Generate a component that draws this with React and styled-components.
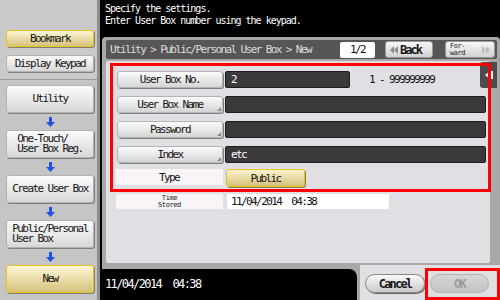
import styled, { createGlobalStyle } from "styled-components";

const GlobalStyle = createGlobalStyle`
  html, body {
    margin: 0;
    padding: 0;
    background: #000;
  }
  body {
    font-family: "DejaVu Sans Mono", "Liberation Mono", monospace;
    font-size: 11px;
    letter-spacing: -1.6px;
  }
`;

const Screen = styled.div`
  width: 500px;
  height: 300px;
  display: flex;
  background: #000;
  overflow: hidden;
`;

const Sidebar = styled.aside`
  box-sizing: border-box;
  width: 100px;
  flex-shrink: 0;
  background: #c5c5c5;
  border-right: 3px solid #8e8e8e;
  display: flex;
  flex-direction: column;
`;

const SideTop = styled.div`
  box-sizing: border-box;
  height: 80px;
  padding: 30px 0 0 6px;
  display: flex;
  flex-direction: column;
  gap: 8px;
  background: #cacaca;
  border-bottom: 1px solid #9b9b9b;
`;

const SideFlow = styled.div`
  padding: 5px 0 0 6px;
  display: flex;
  flex-direction: column;
`;

const SideButton = styled.div`
  box-sizing: border-box;
  width: 88px;
  height: ${(p) => (p.$small ? "17px" : "28px")};
  display: flex;
  align-items: center;
  justify-content: center;
  text-align: left;
  line-height: 10px;
  color: #151515;
  border-radius: 3px;
  border: 1px solid ${(p) => (p.$active ? "#e8c41c" : "#b2b2b2")};
  background: ${(p) =>
    p.$active
      ? "linear-gradient(#fdf7d8, #d6c27c)"
      : "linear-gradient(#fbfbfb, #d8d8d8)"};
  box-shadow: 1px 1px 0 #7f7f7f;
`;

const FlowArrow = styled.div`
  width: 88px;
  height: 17px;
  display: flex;
  align-items: center;
  justify-content: center;
`;

const Main = styled.main`
  flex: 1;
  min-width: 0;
  display: flex;
  flex-direction: column;
  padding-left: 2px;
`;

const Message = styled.div`
  box-sizing: border-box;
  height: 37px;
  flex-shrink: 0;
  padding: 3px 0 0 3px;
  color: #fff;
  font-size: 10px;
  line-height: 12px;
  letter-spacing: -1px;
`;

const Panel = styled.section`
  position: relative;
  flex: 1;
  display: flex;
  flex-direction: column;
  padding: 3px 3px 2px 4px;
  background: #a8a8a8;
  border-radius: 4px 4px 0 0;
`;

const TitleBar = styled.div`
  height: 19px;
  display: flex;
  align-items: center;
  padding: 0 2px 0 4px;
  background: #565656;
  border-radius: 2px;
  color: #dcdcdc;
`;

const Crumb = styled.span`
  flex: 1;
  white-space: nowrap;
`;

const PageBox = styled.div`
  width: 35px;
  height: 16px;
  display: flex;
  align-items: center;
  justify-content: center;
  background: #fff;
  border-radius: 2px;
  color: #111;
`;

const NavButton = styled.div`
  box-sizing: border-box;
  width: ${(p) => p.$w}px;
  height: 17px;
  margin-left: ${(p) => p.$gap}px;
  display: flex;
  align-items: center;
  padding: 0 4px;
  gap: 2px;
  border-radius: 3px;
  border: 1px solid #9a9a9a;
  background: linear-gradient(#f7f7f7, #d2d2d2);
  color: #1a1a1a;
`;

const BackLabel = styled.span`
  font-size: 12px;
  font-weight: bold;
  letter-spacing: -2px;
`;

const TinyText = styled.span`
  flex: 1;
  font-size: 7px;
  line-height: 7px;
  letter-spacing: -0.5px;
  color: #222;
`;

const Content = styled.div`
  position: relative;
  flex: 1;
  margin: 2px 7px 0 0;
  padding: 2px 0 0 4px;
  background: #e0dfe4;
  border-radius: 2px;
`;

const SideTab = styled.div`
  position: absolute;
  left: 374px;
  top: 1px;
  width: 17px;
  height: 26px;
  display: flex;
  align-items: center;
  justify-content: center;
  background: #4c4c4c;
  border-radius: 3px 0 0 3px;
`;

const Form = styled.div`
  position: relative;
  z-index: 1;
  box-sizing: border-box;
  width: 381px;
  border: 3px solid #ff0000;
  padding: 5px 2px 2px 4px;
  display: flex;
  flex-direction: column;
  gap: 8px;
`;

const Row = styled.div`
  display: flex;
  align-items: stretch;
  height: 17px;
  gap: 2px;
`;

const LabelButton = styled.div`
  position: relative;
  box-sizing: border-box;
  width: 106px;
  flex-shrink: 0;
  display: flex;
  align-items: center;
  justify-content: center;
  border-radius: 3px;
  border: 1px solid #b4b4b4;
  background: linear-gradient(#fbfbfb, #d5d5d5);
  box-shadow: 1px 1px 0 #808080;
  color: #151515;

  &::after {
    content: "";
    display: ${(p) => (p.$menu ? "block" : "none")};
    position: absolute;
    right: 1px;
    bottom: 1px;
    border-style: solid;
    border-width: 0 0 4px 4px;
    border-color: transparent transparent #8a8a8a transparent;
  }
`;

const Field = styled.div`
  box-sizing: border-box;
  width: ${(p) => p.$width || "auto"};
  flex: ${(p) => (p.$width ? "none" : "1")};
  display: flex;
  align-items: center;
  padding-left: 5px;
  background: #3a393b;
  border: 1px solid #1d1d1d;
  border-radius: 2px;
  color: #fff;
`;

const Range = styled.span`
  margin-left: 17px;
  align-self: center;
  color: #111;
`;

const TypeRow = styled.div`
  display: flex;
  align-items: flex-start;
  height: 18px;
  margin-top: -2px;
  gap: 3px;
`;

const PlainLabel = styled.div`
  width: ${(p) => p.$w}px;
  height: ${(p) => p.$h}px;
  margin-left: ${(p) => p.$shift || 0}px;
  display: flex;
  align-items: center;
  justify-content: center;
  text-align: center;
  background: #f8f4f7;
  color: #151515;
`;

const YellowButton = styled.div`
  box-sizing: border-box;
  width: 79px;
  height: 18px;
  display: flex;
  align-items: center;
  justify-content: center;
  border-radius: 3px;
  border: 1px solid #e6c21e;
  background: linear-gradient(#fbf3cf, #d7c27c);
  box-shadow: 1px 1px 0 #8a7d4a;
  color: #151515;
`;

const TimeRow = styled.div`
  display: flex;
  height: 15px;
  margin: 2px 0 0 6px;
  gap: 4px;
`;

const StampLabel = styled.div`
  font-size: 7px;
  line-height: 7px;
  letter-spacing: -0.4px;
`;

const TimeValue = styled.div`
  width: 158px;
  display: flex;
  align-items: center;
  padding-left: 4px;
  background: #fff;
  color: #111;
  white-space: pre;
`;

const Footer = styled.div`
  height: 35px;
  flex-shrink: 0;
  display: flex;
  background: #a8a8a8;
`;

const DateBar = styled.div`
  flex: 1;
  margin-top: 4px;
  padding: 9px 0 0 3px;
  background: #000;
  border-top-right-radius: 8px;
  color: #fff;
  font-size: 12px;
  line-height: 12px;
  letter-spacing: -1.6px;
  white-space: pre;
`;

const ActionTab = styled.div`
  box-sizing: border-box;
  width: 143px;
  display: flex;
  align-items: flex-start;
  padding-left: 5px;
  background: #e0dfe4;
  border-left: 3px solid #a8a8a8;
`;

const PillButton = styled.div`
  box-sizing: border-box;
  width: ${(p) => p.$w}px;
  height: 19px;
  margin-top: ${(p) => p.$top || 0}px;
  display: flex;
  align-items: center;
  justify-content: center;
  border-radius: 10px;
  border: 1px solid ${(p) => (p.$disabled ? "#b2b2b2" : "#888")};
  background: ${(p) =>
    p.$disabled
      ? "linear-gradient(#d6d6d6, #c4c4c4)"
      : "linear-gradient(#fafafa, #c9c9c9)"};
  box-shadow: ${(p) => (p.$disabled ? "none" : "1px 1px 0 #666")};
  color: ${(p) => (p.$disabled ? "#9c9c9c" : "#1a1a1a")};
  font-size: 12px;
  font-weight: bold;
  letter-spacing: -1.8px;
`;

const OkFrame = styled.div`
  box-sizing: border-box;
  width: 75px;
  height: 32px;
  margin-top: 3px;
  padding: 3px 0 0 2px;
  border: 3px solid #ff0000;
`;

const DownArrow = () => (
  <svg width="9" height="10" viewBox="0 0 9 10">
    <path d="M3 0h3v5h3L4.5 10 0 5h3z" fill="#1f52ea" />
  </svg>
);

const DoubleArrow = ({ dir, color }) => (
  <svg width="8" height="8" viewBox="0 0 8 8">
    {dir === "left" ? (
      <path d="M4 0v8L0 4zM8 0v8L4 4z" fill={color} />
    ) : (
      <path d="M0 0v8l4-4zM4 0v8l4-4z" fill={color} />
    )}
  </svg>
);

const TabIcon = () => (
  <svg width="8" height="8" viewBox="0 0 8 8">
    <path d="M5 0v8L0 4z" fill="#fff" />
    <rect x="6" y="0" width="2" height="8" fill="#fff" />
  </svg>
);

const flow = [
  { label: "Utility" },
  { label: "One-Touch/\nUser Box Reg." },
  { label: "Create User Box" },
  { label: "Public/Personal\nUser Box" },
  { label: "New", active: true },
];

const fields = [
  { label: "User Box No.", value: "2", width: "125px", range: "1 - 999999999" },
  { label: "User Box Name", value: "", menu: true },
  { label: "Password", value: "", menu: true },
  { label: "Index", value: "etc", menu: true },
];

const App = () => {
  return (
    <Screen>
      <GlobalStyle />
      <Sidebar>
        <SideTop>
          <SideButton $small $active>
            Bookmark
          </SideButton>
          <SideButton $small>Display Keypad</SideButton>
        </SideTop>
        <SideFlow>
          {flow.map((item, i) => (
            <div key={item.label}>
              {i > 0 && (
                <FlowArrow>
                  <DownArrow />
                </FlowArrow>
              )}
              <SideButton $active={item.active}>
                <span style={{ whiteSpace: "pre" }}>{item.label}</span>
              </SideButton>
            </div>
          ))}
        </SideFlow>
      </Sidebar>

      <Main>
        <Message>
          Specify the settings.
          <br />
          Enter User Box number using the keypad.
        </Message>

        <Panel>
          <TitleBar>
            <Crumb>Utility &gt; Public/Personal User Box &gt; New</Crumb>
            <PageBox>1/2</PageBox>
            <NavButton $w={48} $gap={10}>
              <DoubleArrow dir="left" color="#8e8e8e" />
              <BackLabel>Back</BackLabel>
            </NavButton>
            <NavButton $w={50} $gap={12}>
              <TinyText>
                For-
                <br />
                ward
              </TinyText>
              <DoubleArrow dir="right" color="#bdbdbd" />
            </NavButton>
          </TitleBar>

          <Content>
            <SideTab>
              <TabIcon />
            </SideTab>
            <Form>
              {fields.map((f) => (
                <Row key={f.label}>
                  <LabelButton $menu={f.menu}>{f.label}</LabelButton>
                  <Field $width={f.width}>{f.value}</Field>
                  {f.range && <Range>{f.range}</Range>}
                </Row>
              ))}
              <TypeRow>
                <PlainLabel $w={108} $h={16} $shift={-2}>
                  Type
                </PlainLabel>
                <YellowButton>Public</YellowButton>
              </TypeRow>
            </Form>
            <TimeRow>
              <PlainLabel $w={107} $h={15}>
                <StampLabel>
                  Time
                  <br />
                  Stored
                </StampLabel>
              </PlainLabel>
              <TimeValue>11/04/2014  04:38</TimeValue>
            </TimeRow>
          </Content>
        </Panel>

        <Footer>
          <DateBar>11/04/2014  04:38</DateBar>
          <ActionTab>
            <PillButton $w={60} $top={9}>
              Cancel
            </PillButton>
            <OkFrame>
              <PillButton $w={59} $disabled>
                OK
              </PillButton>
            </OkFrame>
          </ActionTab>
        </Footer>
      </Main>
    </Screen>
  );
};

export default App;
